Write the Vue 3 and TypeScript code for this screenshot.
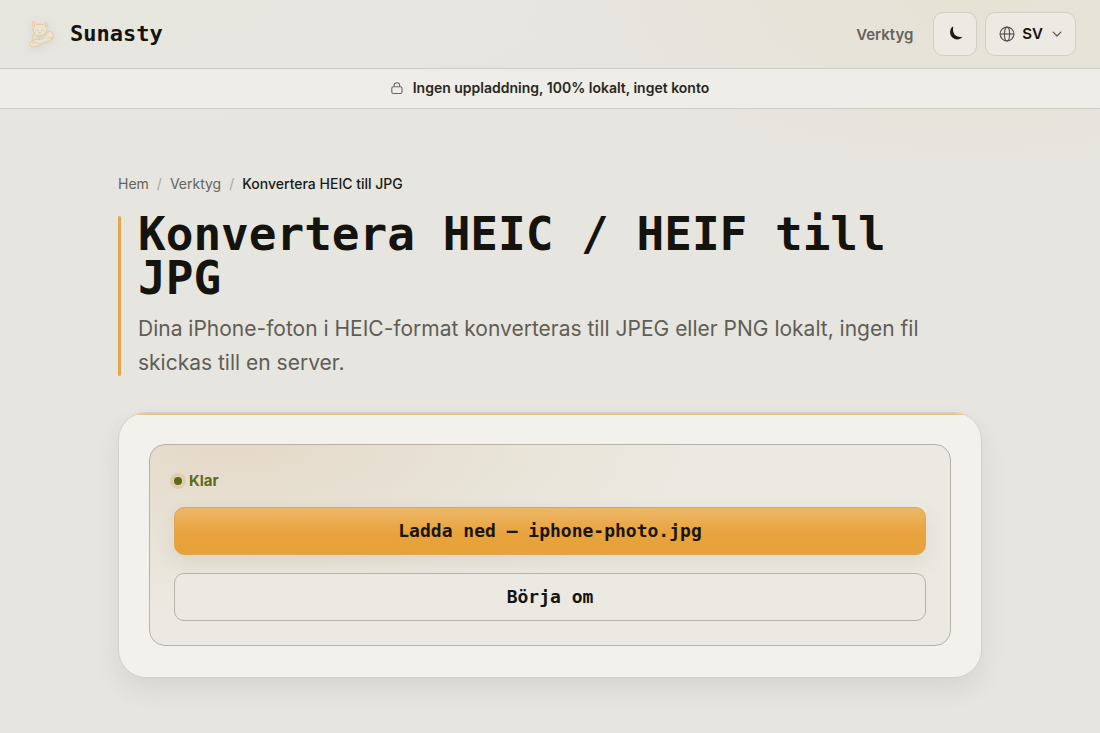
<script setup lang="ts">
import { ref } from 'vue'

interface Crumb {
  label: string
  href?: string
}

const crumbs: Crumb[] = [
  { label: 'Hem', href: '#hem' },
  { label: 'Verktyg', href: '#verktyg' },
  { label: 'Konvertera HEIC till JPG' },
]
const fileName = ref('iphone-photo.jpg')
</script>

<template>
  <div class="page">
    <header class="topbar">
      <a class="brand" href="#hem">
        <svg class="cat" viewBox="0 0 32 32" aria-hidden="true">
          <g fill="none" stroke="#eac68e" stroke-width="0.800" stroke-linejoin="round" stroke-linecap="round">
            <path d="M8.700 12C8 9 8 6.500 8.700 4L12 7.300C14 6.600 16.500 6.600 18.200 7.300L21.300 4.300C22 7.500 21.900 10 21.300 12.700C20.500 16 17.500 17.600 15 17.600C12 17.600 9.500 15.500 8.700 12Z" fill="#eae4d8" />
            <path d="M9.900 6.800V9.300M20.200 7V9.300M11.500 12L13.200 12.500M18.600 12L17 12.500M14.400 14.500H15.800L15.100 15.300Z" />
            <path d="M9.300 15C7.800 17.500 7.500 20 7.800 22.500M20.600 15.500C21.500 17 21.800 18.500 21.600 20.500" />
            <path d="M7.800 22.500C10 20 15 22.500 18.500 20C22 17.800 20.500 14.200 23.700 13.700C27.300 13.400 28.300 18 26.500 20.500C24.200 23.500 18.500 23.600 15.800 25.500C12.500 28 7 29.300 5.800 27C5.200 25.500 6.300 23.700 7.800 22.500Z" fill="#eae4d8" />
            <path d="M8 24.500C11 23.500 13 24.500 15.500 25.500M14 18V20.500M22 20.500C23.200 19 24.800 18.700 26.500 20.500" />
          </g>
        </svg>
        <span>Sunasty</span>
      </a>
      <nav class="tools" aria-label="Huvudmeny">
        <a class="navlink" href="#verktyg">Verktyg</a>
        <button class="control square" type="button" aria-label="Byt tema">
          <svg width="16" height="16" viewBox="0 0 16 16" aria-hidden="true">
            <path d="M4.900 1.200C2.600 3.800 2.500 8.500 4.900 11.100C8 14.400 13.200 14 15.300 10.700C10.500 12.300 4.700 8.400 6.200 1.300C6.200 0.700 5.400 0.700 4.900 1.200Z" fill="#1b1a15" />
          </svg>
        </button>
        <button class="control language" type="button" aria-label="Språk: SV" aria-haspopup="listbox">
          <svg width="16" height="16" viewBox="0 0 16 16" fill="none" stroke="#55534b" stroke-width="1.200" aria-hidden="true">
            <circle cx="8" cy="8" r="6.900" />
            <ellipse cx="8" cy="8" rx="2.600" ry="6.900" />
            <path d="M1.100 8H14.900" />
          </svg>
          <span>SV</span>
          <svg class="chevron" width="10" height="10" viewBox="0 0 10 10" fill="none" stroke="#55534b" stroke-width="1.200" stroke-linecap="round" stroke-linejoin="round" aria-hidden="true">
            <path d="M1.200 3.200L5 7L8.800 3.200" />
          </svg>
        </button>
      </nav>
    </header>

    <div class="notice">
      <svg width="12" height="14" viewBox="0 0 12 14" fill="none" stroke="#69675f" stroke-width="1.100" aria-hidden="true">
        <rect x="0.800" y="5.800" width="10.200" height="6.700" rx="1.600" />
        <path d="M3.100 5.800V4.300C3.100 0.800 8.700 0.800 8.700 4.300V5.800" />
      </svg>
      <strong>Ingen uppladdning, 100% lokalt, inget konto</strong>
    </div>

    <main class="content">
      <nav aria-label="Brödsmulor">
        <ol class="crumbs">
          <li v-for="crumb in crumbs" :key="crumb.label">
            <a v-if="crumb.href" :href="crumb.href">{{ crumb.label }}</a>
            <span v-else aria-current="page">{{ crumb.label }}</span>
          </li>
        </ol>
      </nav>

      <div class="intro">
        <h1>Konvertera HEIC / HEIF till JPG</h1>
        <p>Dina iPhone-foton i HEIC-format konverteras till JPEG eller PNG lokalt, ingen fil skickas till en server.</p>
      </div>

      <section class="card">
        <div class="result">
          <p class="status" role="status">Klar</p>
          <button class="action primary" type="button">Ladda ned — {{ fileName }}</button>
          <button class="action secondary" type="button">Börja om</button>
        </div>
      </section>
    </main>
  </div>
</template>

<style>
body {
  margin: 0;
  background: #e6e5e0;
}
</style>

<style scoped>
* {
  box-sizing: border-box;
}

.page {
  min-height: 100vh;
  font-family: Inter, "Liberation Sans", sans-serif;
  color: #14130e;
  background:
    radial-gradient(ellipse 440px 200px at 88% 0, #e6e2d5 0%, rgba(230, 226, 213, 0) 100%),
    radial-gradient(ellipse 500px 130px at 8% 0, rgba(231, 230, 222, 0.9) 0%, rgba(231, 230, 222, 0) 100%),
    #e6e5e0;
}

a {
  color: inherit;
  text-decoration: none;
}

button {
  margin: 0;
  color: inherit;
  cursor: pointer;
}

.topbar {
  display: flex;
  align-items: center;
  justify-content: space-between;
  padding: 12px 24px;
  border-bottom: 1px solid #cfcdc6;
}

.brand {
  display: flex;
  align-items: center;
  gap: 12px;
  font: 700 22px/28px "DejaVu Sans Mono", monospace;
}

.cat {
  width: 34px;
  height: 34px;
  filter: drop-shadow(0 2px 4px rgba(120, 115, 100, 0.15));
}

.tools {
  display: flex;
  align-items: center;
  gap: 8px;
}

.navlink {
  margin-right: 12px;
  font-size: 15px;
  font-weight: 600;
  color: #65635b;
}

.control {
  display: flex;
  align-items: center;
  justify-content: center;
  height: 44px;
  border: 1px solid #d2cfc5;
  border-radius: 10px;
  background: #edeae3;
  font: 600 15px/20px Inter, "Liberation Sans", sans-serif;
}

.square {
  width: 44px;
  padding: 0;
}

.language {
  gap: 7px;
  padding: 0 13px;
}

.chevron {
  margin-left: 2px;
}

.notice {
  display: flex;
  align-items: center;
  justify-content: center;
  gap: 10px;
  padding: 9px 24px 10px;
  border-bottom: 1px solid #d0cec7;
  background: #eeede8;
  font-size: 14px;
  line-height: 20px;
  color: #282720;
}

.notice strong {
  font-weight: 600;
}

.content {
  max-width: 912px;
  margin: 0 auto;
  padding: 64px 24px 48px;
}

.crumbs {
  display: flex;
  flex-wrap: wrap;
  margin: 0 0 18px;
  padding: 0;
  list-style: none;
  font-size: 14px;
  line-height: 21px;
  color: #65635b;
}

.crumbs li + li::before {
  content: "/";
  margin: 0 8px;
  color: #aaa89f;
}

.crumbs [aria-current] {
  font-weight: 500;
  color: #1b1a15;
}

.intro {
  position: relative;
  padding-left: 20px;
}

.intro::before {
  content: "";
  position: absolute;
  top: 4px;
  bottom: 4px;
  left: 0;
  width: 3px;
  border-radius: 2px;
  background: #e2a64a;
}

h1 {
  margin: 0 0 12px;
  font: 700 46px/44px "DejaVu Sans Mono", monospace;
}

.intro p {
  margin: 0;
  font-size: 21px;
  line-height: 34px;
  color: #5f5d55;
}

.card {
  position: relative;
  margin-top: 32px;
  padding: 31px 30px;
  overflow: hidden;
  border: 1px solid #d3d1ca;
  border-radius: 28px;
  background: #f2f1ec;
  box-shadow: 0 12px 24px rgba(70, 70, 45, 0.09);
}

.card::before {
  content: "";
  position: absolute;
  top: 0;
  left: 0;
  right: 0;
  height: 2px;
  background: #e6c48c;
}

.result {
  display: flex;
  flex-direction: column;
  padding: 24px;
  border: 1px solid #b5b2a9;
  border-radius: 16px;
  background:
    radial-gradient(ellipse 58% 85% at 10% 0, #e5d9c8 0%, #e8e2d5 50%, rgba(236, 233, 226, 0) 100%),
    #ece9e2;
}

.status {
  display: flex;
  align-items: center;
  gap: 7px;
  margin: 0 0 14px;
  font-size: 15px;
  font-weight: 700;
  line-height: 24px;
  color: #5b6b1b;
}

.status::before {
  content: "";
  width: 8px;
  height: 8px;
  border-radius: 50%;
  background: #5b6b1b;
  box-shadow: 0 0 0 4px #dfceb3;
}

.action {
  min-height: 48px;
  padding: 8px 20px;
  border-radius: 10px;
  font: 700 18px/24px "DejaVu Sans Mono", monospace;
}

.primary {
  border: 1px solid #e2a64f;
  background: linear-gradient(#edb768 0%, #e8a33d 55%, #e7a13a 100%);
  box-shadow: 0 8px 20px rgba(90, 85, 60, 0.1);
  color: #1c1405;
}

.secondary {
  margin-top: 18px;
  border: 1px solid #b5b3ab;
  background: #ece9e2;
}
</style>
